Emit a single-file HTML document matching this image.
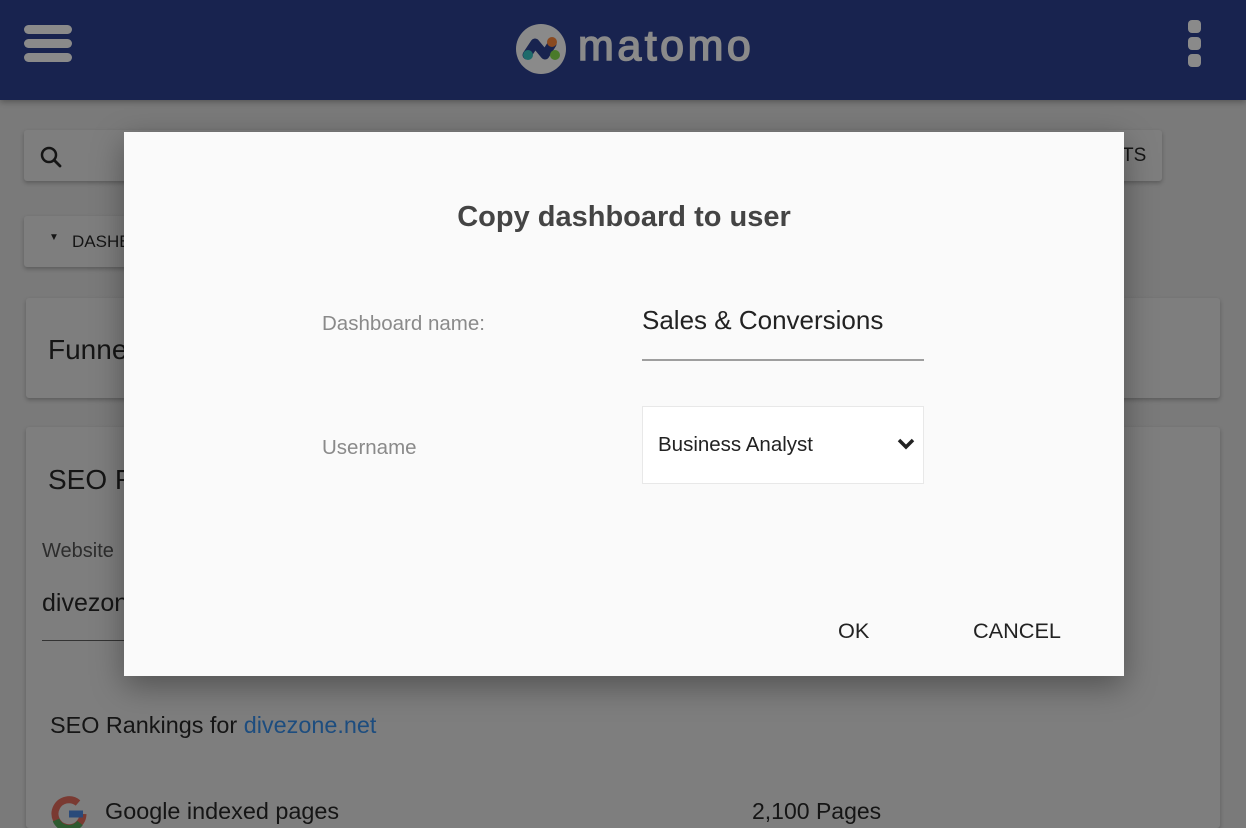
<!DOCTYPE html>
<html style="width:1246px;height:828px;overflow:hidden"><head><meta charset="utf-8"><style>
*{margin:0;padding:0;box-sizing:border-box}
body{width:1246px;height:828px;overflow:hidden;background:#7a7a7a;font-family:"Liberation Sans",Arial,sans-serif;position:relative;color:#151515}
.hdr{position:absolute;left:0;top:0;width:1246px;height:100px;background:#18234f;box-shadow:0 2px 6px rgba(0,0,0,.3)}
.card{position:absolute;background:#7e7e7e;border-radius:3px;box-shadow:0 2px 4px rgba(0,0,0,.25)}
.modal{position:absolute;left:124px;top:132px;width:1000px;height:544px;background:#fafafa;box-shadow:0 10px 30px rgba(0,0,0,.35)}
.t{position:absolute;white-space:nowrap}
</style></head><body>
<div class="hdr">
  <div style="position:absolute;left:24px;top:25px;width:48px;height:9px;border-radius:5px;background:#8a8a8a"></div>
  <div style="position:absolute;left:24px;top:39px;width:48px;height:9px;border-radius:5px;background:#8a8a8a"></div>
  <div style="position:absolute;left:24px;top:53px;width:48px;height:9px;border-radius:5px;background:#8a8a8a"></div>
  <svg style="position:absolute;left:515px;top:23px" width="52" height="52" viewBox="0 0 52 52">
    <circle cx="26" cy="26" r="25" fill="#8a8a8a"/>
    <path d="M12 32 L20 20 L30 32 L37 21" stroke="#18234f" stroke-width="9" fill="none" stroke-linecap="round" stroke-linejoin="round"/>
    <circle cx="13" cy="32" r="5" fill="#1f6b6b"/>
    <circle cx="37" cy="19" r="5" fill="#8a4a20"/>
    <circle cx="40" cy="32" r="5" fill="#4a7a2a"/>
  </svg>
  <div class="t" style="left:578px;top:22px;font-size:43px;color:#8a8a8a;letter-spacing:3.5px;-webkit-text-stroke:1.5px #8a8a8a">matomo</div>
  <div style="position:absolute;left:1188px;top:20px;width:13px;height:13px;border-radius:4px;background:#8a8a8a"></div>
  <div style="position:absolute;left:1188px;top:37px;width:13px;height:13px;border-radius:4px;background:#8a8a8a"></div>
  <div style="position:absolute;left:1188px;top:54px;width:13px;height:13px;border-radius:4px;background:#8a8a8a"></div>
</div>
<div class="card" style="left:24px;top:130px;width:1138px;height:51px"></div>
<svg style="position:absolute;left:39px;top:146px" width="24" height="22" viewBox="0 0 24 22"><circle cx="10" cy="9" r="7" stroke="#151515" stroke-width="2.5" fill="none"/><path d="M15 14 L21 20" stroke="#151515" stroke-width="2.8" stroke-linecap="round"/></svg>
<div class="t" style="left:1122px;top:145px;font-size:19px">TS</div>
<div class="card" style="left:24px;top:216px;width:200px;height:51px"></div>
<div class="t" style="left:49px;top:232px;font-size:10px">▼</div>
<div class="t" style="left:72px;top:232px;font-size:17px">DASHBOARD</div>
<div class="card" style="left:26px;top:298px;width:1194px;height:100px"></div>
<div class="t" style="left:48px;top:334px;font-size:28px">Funnels</div>
<div class="card" style="left:26px;top:427px;width:1194px;height:401px"></div>
<div class="t" style="left:48px;top:464px;font-size:28px">SEO Rankings</div>
<div class="t" style="left:42px;top:540px;font-size:20px;color:#2d2d2d">Website</div>
<div class="t" style="left:42px;top:589px;font-size:25px">divezone.net</div>
<div style="position:absolute;left:42px;top:640px;width:300px;height:1px;background:#333"></div>
<div class="t" style="left:50px;top:712px;font-size:23.4px">SEO Rankings for <span style="color:#1d4d7f">divezone.net</span></div>
<svg style="position:absolute;left:50px;top:795px" width="38" height="38" viewBox="0 0 38 38"><path d="M33 19 A14 14 0 1 1 28 8" stroke="#7a3a32" stroke-width="7" fill="none"/><path d="M19 19 H33" stroke="#2a4a7a" stroke-width="7"/><path d="M6 25 A14 14 0 0 0 30 28" stroke="#2e5a30" stroke-width="7" fill="none"/></svg>
<div class="t" style="left:105px;top:798px;font-size:23.4px">Google indexed pages</div>
<div class="t" style="left:752px;top:798px;font-size:23px">2,100 Pages</div>

<div class="modal">
  <div class="t" style="left:0;width:1000px;text-align:center;top:69px;font-size:29px;font-weight:bold;color:#444">Copy dashboard to user</div>
  <div class="t" style="left:198px;top:180px;font-size:20.5px;color:#8a8a8a">Dashboard name:</div>
  <div class="t" style="left:518px;top:173px;font-size:26px;color:#222">Sales &amp; Conversions</div>
  <div style="position:absolute;left:518px;top:227px;width:282px;height:2px;background:#9e9e9e"></div>
  <div class="t" style="left:198px;top:304px;font-size:20.5px;color:#8a8a8a">Username</div>
  <div style="position:absolute;left:518px;top:274px;width:282px;height:78px;background:#fff;border:1px solid #e8e8e8"></div>
  <div class="t" style="left:534px;top:301px;font-size:20.5px;color:#222">Business Analyst</div>
  <svg style="position:absolute;left:773px;top:306px" width="18" height="12" viewBox="0 0 18 12"><path d="M2 2 L9 9 L16 2" stroke="#222" stroke-width="3.5" fill="none"/></svg>
  <div class="t" style="left:714px;top:486px;font-size:21.7px;color:#222">OK</div>
  <div class="t" style="left:849px;top:486px;font-size:21.7px;color:#222">CANCEL</div>
</div>
</body></html>
